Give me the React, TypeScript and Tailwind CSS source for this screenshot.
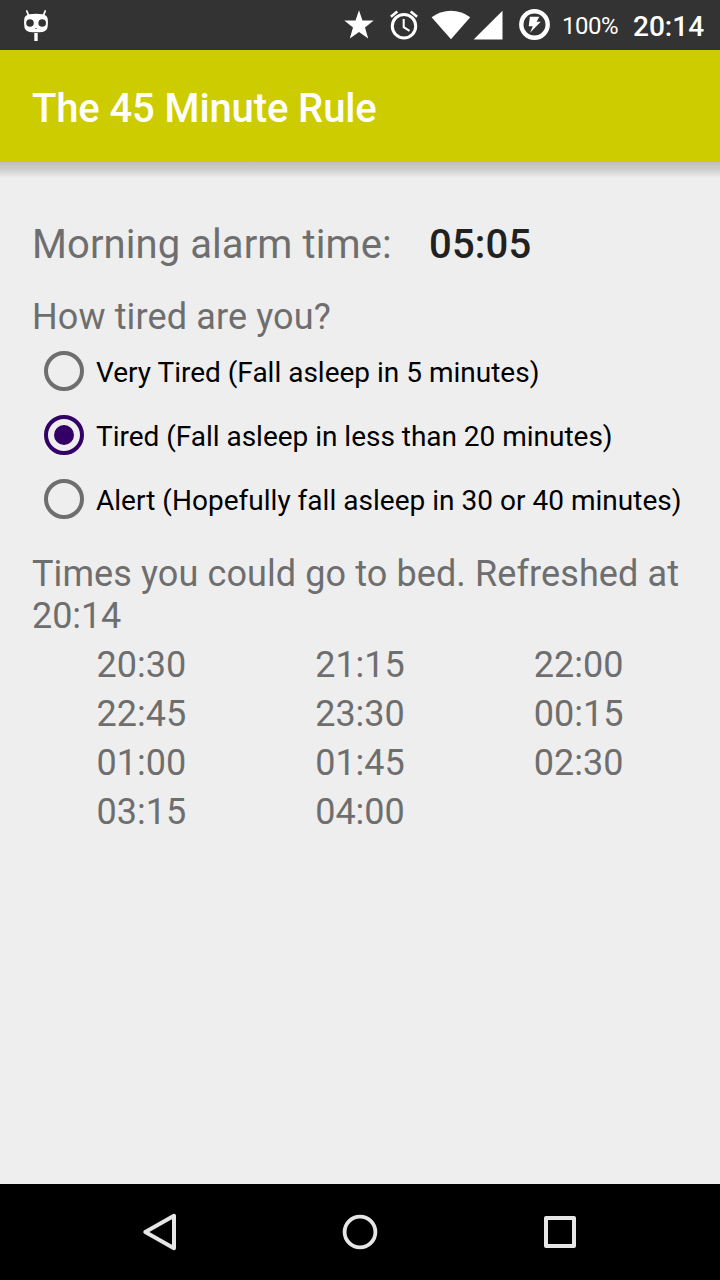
import React, { useState } from "react";

const OPTIONS = [
  { label: "Very Tired (Fall asleep in 5 minutes)", tracking: "tracking-normal" },
  { label: "Tired (Fall asleep in less than 20 minutes)", tracking: "tracking-[-0.02px]" },
  { label: "Alert (Hopefully fall asleep in 30 or 40 minutes)", tracking: "tracking-[0.02px]" },
];

const BED_TIMES = [
  "20:30", "21:15", "22:00",
  "22:45", "23:30", "00:15",
  "01:00", "01:45", "02:30",
  "03:15", "04:00",
];

function StatusBar() {
  return (
    <div className="flex h-[50px] shrink-0 items-center bg-[#333333] text-white">
      <svg className="ml-[20px]" width="32" height="50" viewBox="0 0 32 50" fill="#fff">
        <path d="M6.8 11 L8.6 15.5 M25.2 11 L23.4 15.5" stroke="#fff" strokeWidth="1.8" strokeLinecap="round" />
        <path
          fillRule="evenodd"
          d="M9.5 14.3 Q16 13.4 22.5 14.3 Q27.5 15.2 27.8 19.5 Q28.2 23.5 27.6 27 Q26.8 31.3 22.5 31.9 Q16 32.5 9.5 31.9 Q5.2 31.3 4.4 27 Q3.8 23.5 4.2 19.5 Q4.5 15.2 9.5 14.3Z M10 19.2a3.8 3.8 0 1 0 0 7.6a3.8 3.8 0 1 0 0-7.6Z M22.2 19.2a3.8 3.8 0 1 0 0 7.6a3.8 3.8 0 1 0 0-7.6Z M14.5 28q1.5 1.6 3 0Z"
        />
        <rect x="14.3" y="33" width="3.4" height="8" />
      </svg>
      <svg className="ml-[292px]" width="30" height="50" viewBox="0 0 30 50" fill="#fff">
        <path d="M15 10.2 L18.5 20.5 L29.7 20.6 L21 27.5 L24.2 38.4 L15 32 L5.8 38.4 L9 27.5 L0.3 20.6 L11.5 20.5Z" />
      </svg>
      <svg className="ml-[16px]" width="30" height="50" viewBox="0 0 30 50" fill="none" stroke="#fff">
        <circle cx="14" cy="26.2" r="11.7" strokeWidth="3" />
        <path d="M0.9 16.8 L7.3 11.4 M20.7 11.4 L27.1 16.8" strokeWidth="2.6" />
        <path d="M13.7 19 V27.2 L19.5 30.8" strokeWidth="2.1" />
      </svg>
      <svg className="ml-[11px]" width="40" height="50" viewBox="0 0 40 50" fill="#fff">
        <path d="M0.6 17.3 Q9 10.8 20 10.8 Q31 10.8 39.2 17.3 L20 39.2Z" />
      </svg>
      <svg className="ml-[2px]" width="30" height="50" viewBox="0 0 30 50" fill="#fff">
        <path d="M0.6 39.4 L29.5 10.7 V39.4Z" />
      </svg>
      <svg className="ml-[16px]" width="32" height="50" viewBox="0 0 32 50">
        <circle cx="15.5" cy="24.5" r="13.2" fill="none" stroke="#fff" strokeWidth="4.4" />
        <path d="M10.9 16.8 H20.3 L17.6 21.8 H21.8 L11 32.8 L13.8 26.2 H9.7Z" fill="#fff" />
      </svg>
      <span className="ml-[11px] w-[71px] whitespace-nowrap pt-[2px] text-[24px] leading-[28px] tracking-[-0.5px]">100%</span>
      <span className="whitespace-nowrap pt-[4px] text-[28px] font-medium leading-[32px]">20:14</span>
    </div>
  );
}

function Radio({ checked }: { checked: boolean }) {
  const color = checked ? "#330066" : "#6e6e6e";
  return (
    <svg width="40" height="40" viewBox="0 0 40 40">
      <circle cx="20" cy="20" r="18" fill="none" stroke={color} strokeWidth="4" />
      {checked && <circle cx="20" cy="20" r="10" fill={color} />}
    </svg>
  );
}

function NavigationBar() {
  return (
    <nav className="flex h-24 shrink-0 items-center justify-between bg-black px-[140px]">
      <button aria-label="Back">
        <svg width="40" height="40" viewBox="0 0 40 40" fill="none" stroke="#e6e6e6" strokeWidth="4" strokeLinejoin="round">
          <path d="M34 3.8 V36.2 L5.3 20Z" />
        </svg>
      </button>
      <button aria-label="Home">
        <svg width="40" height="40" viewBox="0 0 40 40" fill="none" stroke="#e6e6e6" strokeWidth="3.8">
          <circle cx="20" cy="20" r="15.4" />
        </svg>
      </button>
      <button aria-label="Recent apps">
        <svg width="40" height="40" viewBox="0 0 40 40" fill="none" stroke="#e6e6e6" strokeWidth="4" strokeLinejoin="round">
          <rect x="6" y="6" width="28" height="28" />
        </svg>
      </button>
    </nav>
  );
}

export default function App() {
  const [selected, setSelected] = useState(1);
  return (
    <div className="flex h-[1280px] w-[720px] flex-col overflow-hidden bg-[#eeeeee] font-[Roboto,sans-serif] text-[#6e6e6e]">
      <StatusBar />
      <header className="flex h-28 shrink-0 items-center bg-[#cccc00] px-8 pt-1.5">
        <h1 className="text-[40px] font-medium leading-[48px] tracking-[-0.12px] text-white">The 45 Minute Rule</h1>
      </header>
      <div className="h-4 shrink-0 bg-linear-to-b from-[#bebebe] via-[#cdcdcd] via-45% to-[#eeeeee]" />
      <main className="flex grow flex-col px-8 pt-[43px]">
        <div className="flex text-[40px] leading-[48px]">
          <span className="w-[397px] tracking-[0.08px]">Morning alarm time:</span>
          <span className="font-medium tracking-[0.2px] text-[#212121]">05:05</span>
        </div>
        <h2 className="mt-[27px] text-[36px] leading-[42px] tracking-[0.13px]">How tired are you?</h2>
        <div className="mt-px flex flex-col" role="radiogroup">
          {OPTIONS.map(({ label, tracking }, i) => (
            <button
              key={label}
              role="radio"
              aria-checked={i === selected}
              onClick={() => setSelected(i)}
              className="flex h-16 items-center gap-3 pl-3 text-left"
            >
              <Radio checked={i === selected} />
              <span className={`whitespace-nowrap pt-[4px] text-[28px] leading-[34px] text-black ${tracking}`}>{label}</span>
            </button>
          ))}
        </div>
        <p className="mt-[22px] text-[36px] leading-[42px] tracking-[0.1px]">
          Times you could go to bed. Refreshed at <span className="tracking-[-0.1px]">20:14</span>
        </p>
        <div className="mt-[4px] grid grid-cols-3 text-center text-[36px] leading-[49px]">
          {BED_TIMES.map((time) => (
            <span key={time}>{time}</span>
          ))}
        </div>
      </main>
      <NavigationBar />
    </div>
  );
}
